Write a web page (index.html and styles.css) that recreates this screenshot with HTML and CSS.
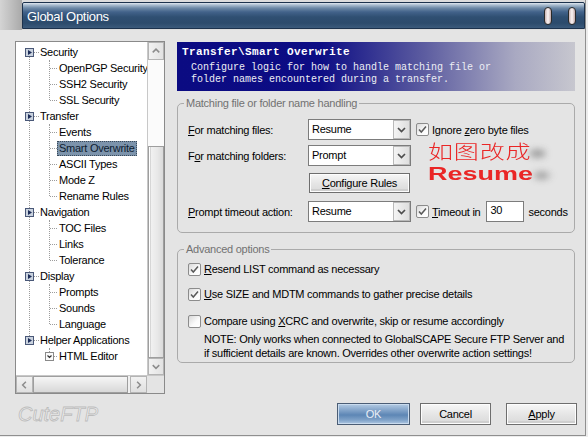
FILE: index.html
```html
<!DOCTYPE html>
<html>
<head>
<meta charset="utf-8">
<title>Global Options</title>
<link rel="stylesheet" href="styles.css">
</head>
<body>
<div class="window">
  <div class="titlebar">
    <div class="tb-corner"></div>
    <div class="tb-bar">
      <span class="tb-title">Global Options</span>
      <span class="tb-btns"><span class="pill"></span><span class="pill"></span></span>
    </div>
  </div>

  <div class="main">
    <div class="tree">
      <div class="tree-view">
        <ul class="nodes">
          <li>
            <div class="row top"><span class="exp"><svg width="9" height="9" viewBox="0 0 9 9"><rect x=".5" y=".5" width="8" height="8" fill="#c9d2de" stroke="#4a5878"/><polygon points="3,2 7,4.5 3,7" fill="#1d2d58"/></svg></span><span class="lbl">Security</span></div>
            <ul class="kids">
              <li class="row kid"><span class="lbl">OpenPGP Security</span></li>
              <li class="row kid"><span class="lbl">SSH2 Security</span></li>
              <li class="row kid"><span class="lbl">SSL Security</span></li>
            </ul>
          </li>
          <li>
            <div class="row top"><span class="exp"><svg width="9" height="9" viewBox="0 0 9 9"><rect x=".5" y=".5" width="8" height="8" fill="#c9d2de" stroke="#4a5878"/><polygon points="3,2 7,4.5 3,7" fill="#1d2d58"/></svg></span><span class="lbl">Transfer</span></div>
            <ul class="kids">
              <li class="row kid"><span class="lbl">Events</span></li>
              <li class="row kid sel"><span class="lbl">Smart Overwrite</span></li>
              <li class="row kid"><span class="lbl">ASCII Types</span></li>
              <li class="row kid"><span class="lbl">Mode Z</span></li>
              <li class="row kid"><span class="lbl">Rename Rules</span></li>
            </ul>
          </li>
          <li>
            <div class="row top"><span class="exp"><svg width="9" height="9" viewBox="0 0 9 9"><rect x=".5" y=".5" width="8" height="8" fill="#c9d2de" stroke="#4a5878"/><polygon points="3,2 7,4.5 3,7" fill="#1d2d58"/></svg></span><span class="lbl">Navigation</span></div>
            <ul class="kids">
              <li class="row kid"><span class="lbl">TOC Files</span></li>
              <li class="row kid"><span class="lbl">Links</span></li>
              <li class="row kid"><span class="lbl">Tolerance</span></li>
            </ul>
          </li>
          <li>
            <div class="row top"><span class="exp"><svg width="9" height="9" viewBox="0 0 9 9"><rect x=".5" y=".5" width="8" height="8" fill="#c9d2de" stroke="#4a5878"/><polygon points="3,2 7,4.5 3,7" fill="#1d2d58"/></svg></span><span class="lbl">Display</span></div>
            <ul class="kids">
              <li class="row kid"><span class="lbl">Prompts</span></li>
              <li class="row kid"><span class="lbl">Sounds</span></li>
              <li class="row kid"><span class="lbl">Language</span></li>
            </ul>
          </li>
          <li>
            <div class="row top"><span class="exp"><svg width="9" height="9" viewBox="0 0 9 9"><rect x=".5" y=".5" width="8" height="8" fill="#c9d2de" stroke="#4a5878"/><polygon points="3,2 7,4.5 3,7" fill="#1d2d58"/></svg></span><span class="lbl">Helper Applications</span></div>
            <ul class="kids">
              <li class="row kid subexp"><span class="exp2"><svg width="9" height="9" viewBox="0 0 9 9"><rect x=".5" y=".5" width="8" height="8" fill="#fafafa" stroke="#8a8a8a"/><path d="M2.5 3.5l2 2 2-2" fill="none" stroke="#333" stroke-width="1.2"/></svg></span><span class="lbl">HTML Editor</span></li>
            </ul>
          </li>
        </ul>
        <div class="vscroll">
          <div class="sb-btn"><svg width="15" height="16" viewBox="0 0 15 16"><path d="M4 9.5l3.5-3.5 3.5 3.5" fill="none" stroke="#8c8c8c" stroke-width="1.6"/></svg></div>
          <div class="sb-track"></div>
          <div class="sb-thumb"></div>
          <div class="sb-btn"><svg width="15" height="15" viewBox="0 0 15 15"><path d="M4 6l3.5 3.5 3.5-3.5" fill="none" stroke="#8c8c8c" stroke-width="1.6"/></svg></div>
        </div>
      </div>
      <div class="hscroll-row">
        <div class="sb-btn h"><svg width="16" height="16" viewBox="0 0 16 16"><path d="M9.5 4.5l-3.5 3.5 3.5 3.5" fill="none" stroke="#8c8c8c" stroke-width="1.6"/></svg></div>
        <div class="hthumb"></div>
        <div class="sb-btn h"><svg width="16" height="16" viewBox="0 0 16 16"><path d="M6.5 4.5l3.5 3.5-3.5 3.5" fill="none" stroke="#8c8c8c" stroke-width="1.6"/></svg></div>
        <div class="corner"></div>
      </div>
    </div>

    <div class="content">
      <div class="banner">
        <div class="banner-title">Transfer\Smart Overwrite</div>
        <div class="banner-desc">Configure logic for how to handle matching file or<br>folder names encountered during a transfer.</div>
      </div>

      <fieldset class="group g1">
        <legend>Matching file or folder name handling</legend>
        <div class="frow r1">
          <span class="flabel"><u>F</u>or matching files:</span>
          <div class="select"><span class="sel-val">Resume</span><span class="sel-btn"><svg width="15" height="17" viewBox="0 0 15 17"><path d="M4 7l3.5 3.5 3.5-3.5" fill="none" stroke="#4d4d4d" stroke-width="1.7"/></svg></span></div>
          <span class="cb"><svg width="11" height="11" viewBox="0 0 11 11"><path d="M2 5.5l2.3 2.5 4.7-5.5" fill="none" stroke="#5a5a5a" stroke-width="1.5"/></svg></span>
          <span class="cblabel">Ignore <u>z</u>ero byte files</span>
        </div>
        <div class="frow r2">
          <span class="flabel">F<u>o</u>r matching folders:</span>
          <div class="select"><span class="sel-val">Prompt</span><span class="sel-btn"><svg width="15" height="17" viewBox="0 0 15 17"><path d="M4 7l3.5 3.5 3.5-3.5" fill="none" stroke="#4d4d4d" stroke-width="1.7"/></svg></span></div>
        </div>
        <div class="frow r-btn">
          <span class="flabel"></span>
          <span class="btn cfg"><u>C</u>onfigure Rules</span>
        </div>
        <div class="frow r3">
          <span class="flabel"><u>P</u>rompt timeout action:</span>
          <div class="select"><span class="sel-val">Resume</span><span class="sel-btn"><svg width="15" height="17" viewBox="0 0 15 17"><path d="M4 7l3.5 3.5 3.5-3.5" fill="none" stroke="#4d4d4d" stroke-width="1.7"/></svg></span></div>
          <span class="cb"><svg width="11" height="11" viewBox="0 0 11 11"><path d="M2 5.5l2.3 2.5 4.7-5.5" fill="none" stroke="#5a5a5a" stroke-width="1.5"/></svg></span>
          <span class="cblabel"><u>T</u>imeout in</span>
          <span class="num">30</span>
          <span class="secs">seconds</span>
        </div>
      </fieldset>

      <fieldset class="group g2">
        <legend>Advanced options</legend>
        <div class="crow c1">
          <span class="cb"><svg width="11" height="11" viewBox="0 0 11 11"><path d="M2 5.5l2.3 2.5 4.7-5.5" fill="none" stroke="#5a5a5a" stroke-width="1.5"/></svg></span>
          <span class="cblabel"><u>R</u>esend LIST command as necessary</span>
        </div>
        <div class="crow c2">
          <span class="cb"><svg width="11" height="11" viewBox="0 0 11 11"><path d="M2 5.5l2.3 2.5 4.7-5.5" fill="none" stroke="#5a5a5a" stroke-width="1.5"/></svg></span>
          <span class="cblabel"><u>U</u>se SIZE and MDTM commands to gather precise details</span>
        </div>
        <div class="crow c3">
          <span class="cb"></span>
          <span class="cblabel">Compare using <u>X</u>CRC and overwrite, skip or resume accordingly</span>
        </div>
        <div class="note">NOTE: Only works when connected to GlobalSCAPE Secure FTP Server and<br>if sufficient details are known. Overrides other overwrite action settings!</div>
      </fieldset>
    </div>
  </div>

  <div class="footer">
    <span class="logo">CuteFTP</span>
    <span class="btn ok">OK</span>
    <span class="btn cancel">Cancel</span>
    <span class="btn apply"><u>A</u>pply</span>
  </div>

  <div class="annot">
    <div class="annot-cn">如图改成</div>
    <div class="annot-en">Resume</div>
  </div>
</div>
</body>
</html>
```

FILE: styles.css
```css
* { box-sizing: border-box; }
html, body { margin: 0; padding: 0; }
body {
  width: 588px;
  height: 437px;
  overflow: hidden;
  background: #ececec;
  font-family: "Liberation Sans", Arial, sans-serif;
  font-size: 11px;
  letter-spacing: -0.25px;
  color: #000;
}
u { text-decoration: underline; text-underline-offset: 1px; }

.window {
  position: relative;
  width: 586px;
  height: 436px;
  background: #e4e4e4;
  border-right: 1px solid #8f8f8f;
  border-bottom: 1px solid #8f8f8f;
  display: flex;
  flex-direction: column;
}

/* title bar */
.titlebar {
  height: 30px;
  display: flex;
  background: #dcdcdc;
  flex: none;
}
.tb-corner {
  width: 22px;
  height: 30px;
  background: linear-gradient(to right, #d4d4d4, #bdbdbd 55%, #a9a9a9);
}
.tb-bar {
  flex: 1;
  margin-top: 2px;
  height: 27px;
  border: 1px solid #1c324d;
  border-radius: 2px 2px 0 0;
  background: linear-gradient(to bottom, #dfe7ef 0, #aabdd0 2px, #6e8aa7 5px, #42628a 9px, #2f4f72 14px, #2c4b6c 80%, #3b5a7b 100%);
  display: flex;
  align-items: center;
  padding-left: 4px;
  padding-top: 1px;
}
.tb-title {
  color: #fff;
  font-size: 13px;
  letter-spacing: -0.3px;
  flex: 1;
}
.tb-btns { display: flex; gap: 16px; margin-right: 8px; }
.pill {
  width: 8px;
  height: 18px;
  border-radius: 4px;
  border: 1px solid #2a2a2a;
  background: linear-gradient(to right, #c9b3b3, #fbf5f5 50%, #c2a9a9);
}

/* main area */
.main {
  height: 364px;
  flex: none;
  display: flex;
  padding: 11px 0 0 15px;
}

/* tree */
.tree {
  width: 150px;
  height: 353px;
  border: 1px solid #8a8a8a;
  background: #fff;
  display: flex;
  flex-direction: column;
}
.tree-view { display: flex; height: 333px; }
.nodes {
  flex: 1;
  list-style: none;
  margin: 0;
  padding: 2px 0 0;
  position: relative;
  overflow: hidden;
}
.nodes::before {
  content: "";
  position: absolute;
  left: 13px;
  top: 10px;
  height: 288px;
  border-left: 1px dotted #9c9c9c;
}
.nodes li { list-style: none; }
.row {
  height: 16px;
  line-height: 16px;
  display: flex;
  align-items: center;
  white-space: nowrap;
  position: relative;
}
.top { padding-left: 9px; }
.exp {
  width: 9px;
  height: 9px;
  display: block;
  position: relative;
  z-index: 1;
  background: #fff;
}
.exp svg, .exp2 svg { display: block; }
.exp::after {
  content: "";
  position: absolute;
  left: 9px;
  top: 4px;
  width: 5px;
  border-top: 1px dotted #9c9c9c;
}
.lbl { padding: 0 2px; line-height: 14px; }
.top .lbl { margin-left: 4px; }
.kids {
  margin: 0;
  padding: 0;
  position: relative;
}
.kids::before {
  content: "";
  position: absolute;
  left: 33px;
  top: 0;
  bottom: 8px;
  border-left: 1px dotted #9c9c9c;
}
.kid { padding-left: 41px; }
.kid::before {
  content: "";
  position: absolute;
  left: 34px;
  top: 8px;
  width: 7px;
  border-top: 1px dotted #9c9c9c;
}
.kid.sel .lbl {
  background: #7c93ab;
  color: #0d1c30;
  outline: 1px dotted #3a4a5a;
  outline-offset: -1px;
  line-height: 15px;
}
.subexp { padding-left: 29px; }
.subexp::before { left: 38px; width: 3px; }
.exp2 { width: 9px; height: 9px; margin-right: 3px; position: relative; z-index: 1; background: #fff; }

.vscroll {
  width: 17px;
  display: flex;
  flex-direction: column;
  border-left: 1px solid #c8c8c8;
  background: #f7f7f7;
}
.sb-btn {
  height: 18px;
  flex: none;
  border: 1px solid #b4b4b4;
  background: linear-gradient(to right, #f2f2f2, #e2e2e2);
  display: flex;
  align-items: center;
  justify-content: center;
}
.vscroll .sb-btn:last-child { height: 17px; }
.sb-track { height: 86px; flex: none; background: #fbfbfb; }
.sb-thumb {
  flex: 1;
  border: 1px solid #9e9e9e;
  box-shadow: inset 1px 0 0 #fff, inset 2px 0 0 #d6d6d6;
  background: linear-gradient(to right, #f4f4f4, #e8e8e8 60%, #dadada);
}
.hscroll-row {
  height: 18px;
  display: flex;
  border-top: 1px solid #c8c8c8;
  background: #f0f0f0;
}
.sb-btn.h { width: 17px; height: 17px; background: linear-gradient(#f2f2f2, #e0e0e0); }
.hthumb {
  width: 95px;
  border: 1px solid #9e9e9e;
  background: linear-gradient(#f6f6f6, #e4e4e4 60%, #d8d8d8);
}
.hscroll-row .sb-btn.h:nth-child(3) { margin-left: auto; }
.corner { width: 17px; background: #e4e4e4; }

/* right content */
.content {
  width: 398px;
  margin-left: 12px;
  padding-top: 1px;
}
.banner {
  height: 49px;
  padding: 4px 0 0 5px;
  background: linear-gradient(to right, #0b0b82 0%, #0c0c84 36%, #5c5ca0 62%, #a9a9c2 85%, #c7c7cf 100%);
  font-family: "Liberation Mono", "DejaVu Sans Mono", monospace;
  color: #fff;
  letter-spacing: 0;
}
.banner-title {
  font-weight: bold;
  font-size: 11px;
  letter-spacing: 0.4px;
  line-height: 12px;
}
.banner-desc {
  margin-top: 4px;
  padding-left: 9px;
  font-size: 10px;
  line-height: 12px;
  color: #eceef4;
}

.group {
  margin: 0;
  padding: 0 0 0 10px;
  border: 1px solid #aaaaaa;
  border-radius: 5px;
  min-width: 0;
}
.group legend {
  padding: 0 2px;
  margin-left: -4px;
  font-size: 11px;
  line-height: 13px;
  color: #727272;
}
.g1 { margin-top: 6px; padding-bottom: 10px; }
.g2 { margin-top: 10px; padding-bottom: 2px; }

.frow { display: flex; align-items: center; height: 21px; }
.r1 { margin-top: 9px; }
.r2 { margin-top: 5px; }
.r-btn { margin-top: 7px; height: 20px; }
.r3 { margin-top: 8px; }
.flabel { width: 120px; flex: none; }

.select {
  width: 103px;
  height: 21px;
  border: 1px solid #7c7c7c;
  background: #fff;
  display: flex;
  align-items: stretch;
}
.sel-val { flex: 1; padding-left: 3px; line-height: 19px; }
.sel-btn {
  width: 17px;
  border: 1px solid #b9b9b9;
  background: linear-gradient(to right, #f4f4f4, #dedede);
  display: flex;
  align-items: center;
  justify-content: center;
}

.cb {
  width: 13px;
  height: 13px;
  flex: none;
  border: 1px solid #8c8c8c;
  border-radius: 2px;
  background: linear-gradient(135deg, #d9d9d9, #fbfbfb 60%, #ffffff);
  display: flex;
  align-items: center;
  justify-content: center;
}
.frow .cb { margin-left: 5px; }
.cblabel { margin-left: 3px; white-space: nowrap; }

.num {
  width: 38px;
  height: 21px;
  margin-left: 6px;
  border: 1px solid #7c7c7c;
  background: #fff;
  padding-left: 3px;
  line-height: 17px;
}
.secs { margin-left: 4px; }

.btn {
  display: flex;
  align-items: center;
  justify-content: center;
  border: 1px solid #6e6e6e;
  box-shadow: inset 0 0 0 1px #fdfdfd, inset 0 -2px 0 1px #cfcfcf;
  background: linear-gradient(#f7f7f7, #e6e6e6 50%, #d9d9d9);
  white-space: nowrap;
}
.cfg { width: 101px; height: 20px; margin-left: 1px; }

.crow { display: flex; align-items: center; height: 16px; }
.c1 { margin-top: 5px; }
.c2 { margin-top: 9px; }
.c3 { margin-top: 11px; }
.note { margin-top: 3px; padding-left: 16px; line-height: 14px; white-space: nowrap; }

/* footer */
.footer {
  flex: 1;
  display: flex;
  align-items: flex-start;
  padding: 9px 0 0 18px;
}
.logo {
  font-style: italic;
  font-size: 20px;
  line-height: 22px;
  letter-spacing: 0;
  color: #eeeeee;
  -webkit-text-stroke: 0.8px #bcbcbc;
  margin-top: 0;
}
.footer .btn { height: 22px; }
.ok {
  margin-left: auto;
  width: 73px;
  border-color: #4b5d75;
  box-shadow: inset 0 0 0 1px #c9dbee;
  background: linear-gradient(#b4cbe3 0%, #7d9fc6 35%, #5d86b5 55%, #7fa2c8 80%, #b0c8e2 100%);
  color: #e9eef6;
}
.cancel { width: 71px; margin-left: 10px; }
.apply { width: 71px; margin-left: 15px; margin-right: 8px; }

/* red annotation overlaid on the screenshot */
.annot {
  position: absolute;
  left: 428px;
  top: 143px;
  color: #ea2626;
  pointer-events: none;
  letter-spacing: 0;
}
.annot-cn {
  position: relative;
  font-family: "Liberation Sans", "Noto Sans CJK SC", sans-serif;
  font-weight: 300;
  font-size: 19px;
  line-height: 20px;
  letter-spacing: 0.6px;
  transform: scaleX(1.32);
  transform-origin: left center;
  width: 80px;
}
.annot-en {
  position: relative;
  margin-top: 2px;
  font-family: "Liberation Sans", Arial, sans-serif;
  font-weight: bold;
  font-size: 19px;
  line-height: 18px;
  transform: scaleX(1.42);
  transform-origin: left center;
  width: 75px;
}
.annot-cn::after, .annot-en::after {
  content: "";
  position: absolute;
  top: 6px;
  width: 12px;
  height: 9px;
  border-radius: 5px;
  background: #8a8a8a;
  filter: blur(3px);
  opacity: .7;
}
.annot-cn::after { left: 77px; }
.annot-en::after { left: 75px; width: 10px; }
```
